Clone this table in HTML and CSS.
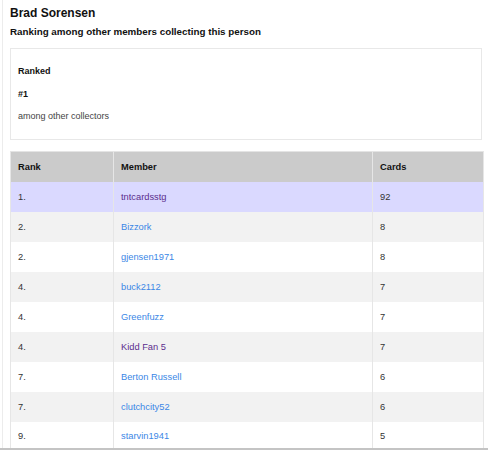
FILE: index.html
```html
<!DOCTYPE html>
<html>
<head>
<meta charset="utf-8">
<link rel="stylesheet" href="styles.css">
</head>
<body>
<div class="frame">
  <div class="content">
    <h1 class="title">Brad Sorensen</h1>
    <h2 class="subtitle">Ranking among other members collecting this person</h2>
    <div class="card">
      <div class="card-label">Ranked</div>
      <div class="card-rank">#1</div>
      <div class="card-note">among other collectors</div>
    </div>
    <table class="ranks">
      <colgroup>
        <col class="c-rank"><col class="c-member"><col class="c-cards">
      </colgroup>
      <thead>
        <tr><th>Rank</th><th>Member</th><th>Cards</th></tr>
      </thead>
      <tbody>
        <tr class="me"><td>1.</td><td><a class="visited" href="#">tntcardsstg</a></td><td>92</td></tr>
        <tr><td>2.</td><td><a href="#">Bizzork</a></td><td>8</td></tr>
        <tr><td>2.</td><td><a href="#">gjensen1971</a></td><td>8</td></tr>
        <tr><td>4.</td><td><a href="#">buck2112</a></td><td>7</td></tr>
        <tr><td>4.</td><td><a href="#">Greenfuzz</a></td><td>7</td></tr>
        <tr><td>4.</td><td><a class="visited" href="#">Kidd Fan 5</a></td><td>7</td></tr>
        <tr><td>7.</td><td><a href="#">Berton Russell</a></td><td>6</td></tr>
        <tr><td>7.</td><td><a href="#">clutchcity52</a></td><td>6</td></tr>
        <tr><td>9.</td><td><a href="#">starvin1941</a></td><td>5</td></tr>
      </tbody>
    </table>
  </div>
</div>
</body>
</html>
```

FILE: styles.css
```css
html, body {
  margin: 0;
  padding: 0;
  background: #fff;
}
body {
  font-family: "Liberation Sans", Arial, sans-serif;
  color: #222;
}
.frame {
  height: 448px;
  overflow: hidden;
  border-bottom: 2px solid #c4c4c4;
}
.content {
  margin-left: 2px;
  border-left: 1px solid #ececec;
  padding-left: 7px;
  height: 100%;
  width: 475px;
}
.title {
  margin: 0;
  padding-top: 6px;
  font-size: 12px;
  font-weight: bold;
  line-height: 14px;
  color: #111;
}
.subtitle {
  margin: 6px 0 0 0;
  font-size: 9.8px;
  font-weight: bold;
  line-height: 12px;
  color: #111;
}
.card {
  margin-top: 10px;
  border: 1px solid #e8e8e8;
  width: 472px;
  box-sizing: border-box;
  padding: 17px 7px 17px 7px;
  font-size: 9px;
  line-height: 11px;
}
.card-label {
  font-weight: bold;
  color: #111;
}
.card-rank {
  margin-top: 12px;
  font-weight: bold;
  color: #111;
}
.card-note {
  margin-top: 11px;
  color: #444;
}
.ranks {
  margin-top: 11px;
  width: 473px;
  border-collapse: collapse;
  table-layout: fixed;
  font-size: 9.3px;
  border: 1px solid #e4e4e4;
}
.c-rank { width: 103px; }
.c-member { width: 259px; }
.c-cards { width: 111px; }
.ranks th, .ranks td {
  height: 30px;
  padding: 0 7px;
  box-sizing: border-box;
  text-align: left;
  border-left: 1px solid #e6e6e6;
  border-right: 1px solid #e6e6e6;
}
.ranks th {
  background: #cbcbcb;
  font-weight: bold;
  color: #111;
}
.ranks td {
  color: #333;
}
.ranks tbody tr:nth-child(odd) { background: #ffffff; }
.ranks tbody tr:nth-child(even) { background: #f2f2f2; }
.ranks tbody tr.me { background: #dad9ff; }
.ranks a {
  color: #3b87e6;
  text-decoration: none;
}
.ranks a.visited {
  color: #5b2d8e;
}
```
